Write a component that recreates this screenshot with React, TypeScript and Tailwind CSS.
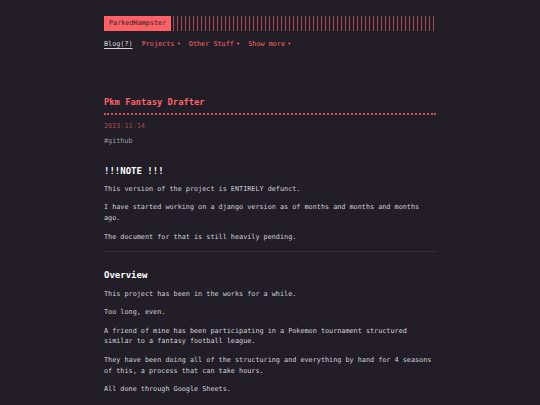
export default function App() {
  const menu = ["Projects", "Other Stuff", "Show more"];

  return (
    <div className="min-h-screen bg-[#211e28] font-['DejaVu_Sans_Mono',monospace] text-[6.8px] leading-[10.9px] text-[#d2d1d6]">
      <div className="mx-auto w-[332px] pt-[16px]">
        <header>
          <div className="flex h-[15px] items-stretch gap-[2px]">
            <div className="flex items-center bg-[#ff6266] px-[5px] text-[#221f29]">
              ParkedHampster
            </div>
            <div className="flex-1 bg-[repeating-linear-gradient(90deg,#ff6266_0,#ff6266_1px,transparent_1px,transparent_4px)] opacity-60" />
          </div>
          <nav className="mt-[8px] flex items-center gap-[9px]">
            <a className="text-[#d6d5da] underline underline-offset-2">Blog(?)</a>
            {menu.map((item) => (
              <span key={item} className="flex items-center gap-[3px] text-[#ff6266]">
                {item}
                <span className="text-[4px]">▼</span>
              </span>
            ))}
          </nav>
        </header>

        <article className="mt-[46px]">
          <h1 className="border-b-2 border-dotted border-[#ff6266]/80 pb-[5px] text-[8.8px] leading-[12px] font-bold text-[#ff6266]">
            Pkm Fantasy Drafter
          </h1>
          <div className="mt-[6.5px] text-[#a9474e]">2023-11-14</div>
          <div className="mt-[4px] text-[#9b9aa0]">#github</div>

          <div className="mt-[18px]">
            <h2 className="mb-[6.5px] text-[9px] leading-[12px] font-bold text-white">
              !!!NOTE !!!
            </h2>
            <p className="mb-[7.6px]">This version of the project is ENTIRELY defunct.</p>
            <p className="mb-[7.6px]">
              I have started working on a django version as of months and months and months ago.
            </p>
            <p>The document for that is still heavily pending.</p>

            <hr className="mt-[8.5px] border-t border-[#35323d]" />

            <h2 className="mt-[17px] mb-[7.5px] text-[9px] leading-[12px] font-bold text-white">
              Overview
            </h2>
            <p className="mb-[7.6px]">This project has been in the works for a while.</p>
            <p className="mb-[7.6px]">Too long, even.</p>
            <p className="mb-[7.6px]">
              A friend of mine has been participating in a Pokemon tournament structured similar
              to a fantasy football league.
            </p>
            <p className="mb-[7.6px]">
              They have been doing all of the structuring and everything by hand for 4 seasons of
              this, a process that can take hours.
            </p>
            <p className="mb-[7.6px]">All done through Google Sheets.</p>
          </div>
        </article>
      </div>
    </div>
  );
}
